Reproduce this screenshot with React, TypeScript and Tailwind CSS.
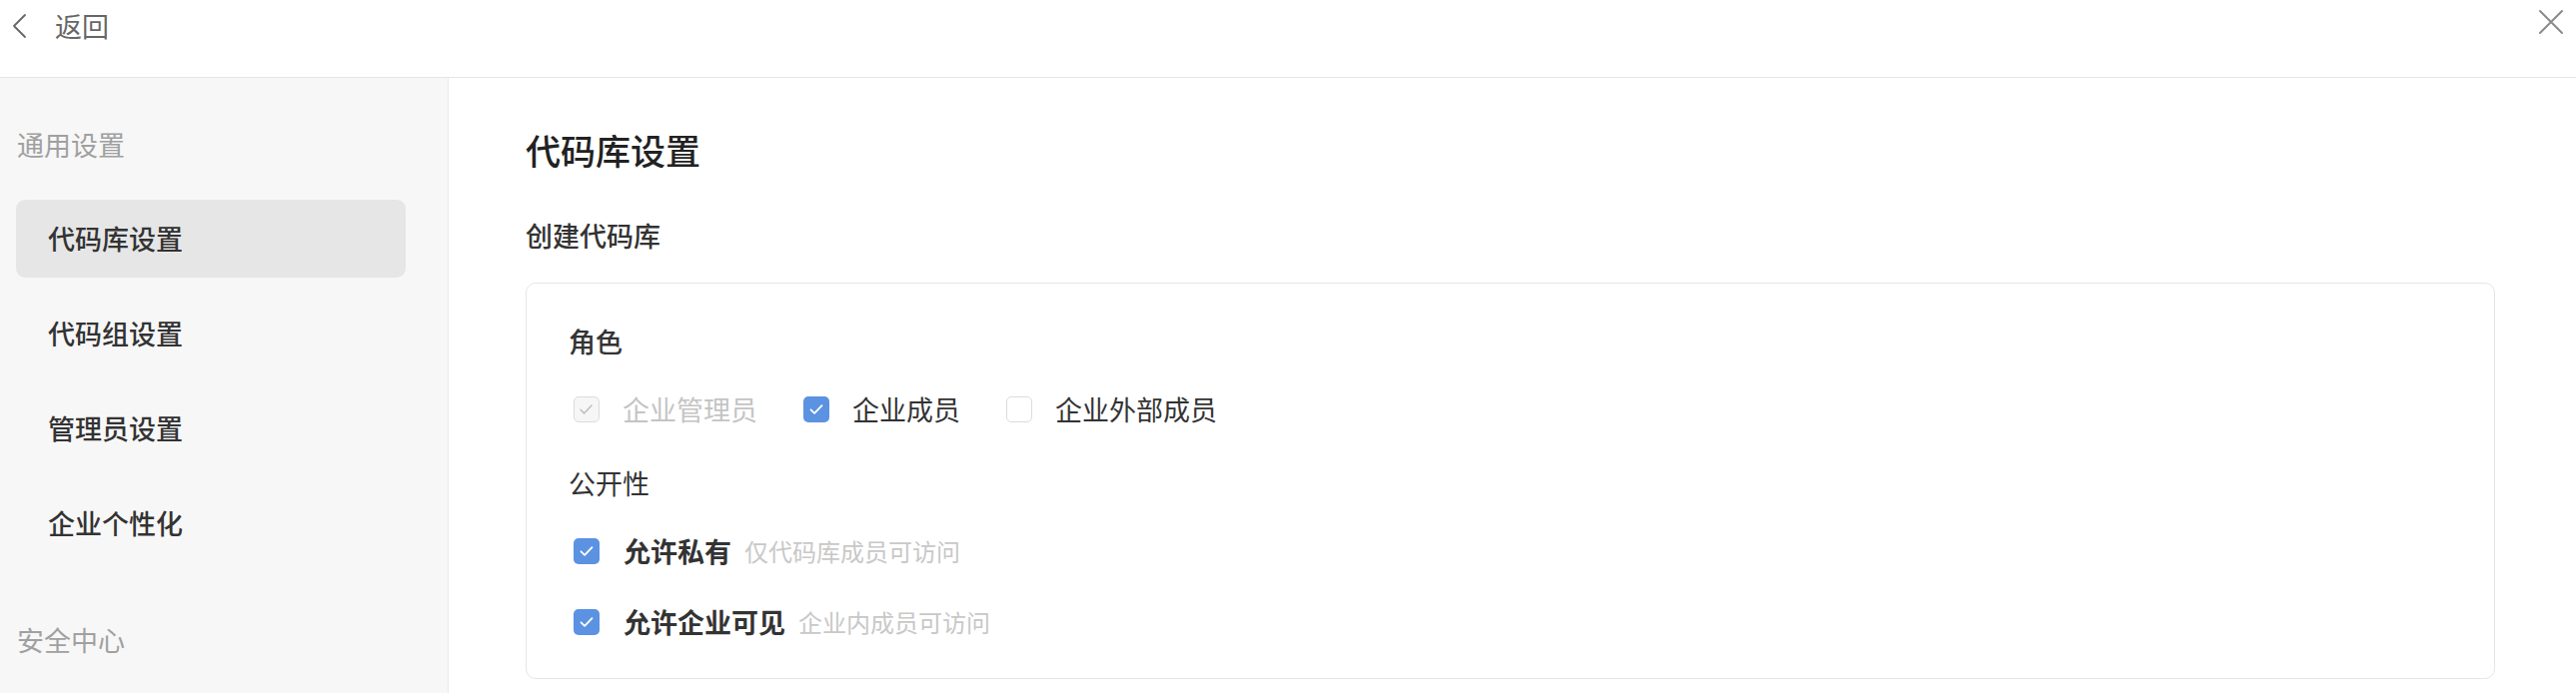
import React from "react";

const font = {
  fontFamily: '"Noto Sans CJK SC", "Noto Sans", sans-serif',
};

type BoxState = "checked" | "unchecked" | "disabled";

const CheckBox = ({ state }: { state: BoxState }) => {
  if (state === "checked") {
    return (
      <span className="flex h-[26px] w-[26px] shrink-0 items-center justify-center rounded-[5px] bg-[#5b92e2]">
        <svg width="20" height="20" viewBox="0 0 20 20" fill="none">
          <path d="M4.5 10.3l3.6 3.6 7.4-7.8" stroke="#fff" strokeWidth="1.8" strokeLinecap="round" strokeLinejoin="round" />
        </svg>
      </span>
    );
  }
  if (state === "disabled") {
    return (
      <span className="flex h-[26px] w-[26px] shrink-0 items-center justify-center rounded-[5px] border border-[#dcdcdc] bg-[#f6f6f6]">
        <svg width="20" height="20" viewBox="0 0 20 20" fill="none">
          <path d="M4 10.3l3.6 3.6 7.4-7.8" stroke="#bdbdbd" strokeWidth="1.5" strokeLinecap="round" strokeLinejoin="round" />
        </svg>
      </span>
    );
  }
  return <span className="h-[26px] w-[26px] shrink-0 rounded-[5px] border border-[#dcdcdc] bg-white" />;
};

const RoleOption = ({ label, state }: { label: string; state: BoxState }) => (
  <div className="mr-[46px] flex items-center gap-[23px]">
    <CheckBox state={state} />
    <span className={`text-[27px] leading-[40px] ${state === "disabled" ? "text-[#c4c4c4]" : "text-[#333]"}`}>
      {label}
    </span>
  </div>
);

const VisibilityOption = ({ label, hint }: { label: string; hint: string }) => (
  <div className="flex h-[40px] items-center">
    <CheckBox state="checked" />
    <span className="ml-[24px] text-[27px] font-semibold leading-[40px] text-[#333]">{label}</span>
    <span className="ml-[13px] text-[24px] leading-[40px] text-[#c8c8c8]">{hint}</span>
  </div>
);

const menu = ["代码库设置", "代码组设置", "管理员设置", "企业个性化"];

export default function App() {
  return (
    <div className="flex h-[694px] w-full flex-col overflow-hidden bg-white" style={font}>
      {/* top bar */}
      <div className="flex h-[78px] shrink-0 items-start justify-between border-b border-[#e6e6e6] pt-[4px]">
        <div className="flex h-[44px] items-center pl-[10px]">
          <svg width="20" height="28" viewBox="0 0 20 28" fill="none">
            <path d="M15 3L4 14l11 11" stroke="#666" strokeWidth="1.8" strokeLinecap="round" strokeLinejoin="round" />
          </svg>
          <span className="ml-[25px] text-[27px] leading-[40px] text-[#666]">返回</span>
        </div>
        <div className="mr-[12px] mt-[5px] flex h-[26px] w-[26px] items-center justify-center">
          <svg width="26" height="26" viewBox="0 0 26 26" fill="none">
            <path d="M2 2l22 22M24 2L2 24" stroke="#8a8a8a" strokeWidth="2" strokeLinecap="round" />
          </svg>
        </div>
      </div>

      <div className="flex min-h-0 flex-1">
        {/* sidebar */}
        <aside className="flex w-[449px] shrink-0 flex-col border-r border-[#ebebeb] bg-[#f7f7f7] pt-[47px]">
          <div className="pl-[17px] text-[27px] leading-[40px] text-[#a0a0a0]">通用设置</div>
          <nav className="mt-[35px] flex flex-col gap-[17px] pl-[16px] pr-[42px]">
            {menu.map((item, i) => (
              <div
                key={item}
                className={`flex h-[78px] items-center rounded-[9px] pl-[32px] text-[27px] font-medium text-[#333] ${
                  i === 0 ? "bg-[#e6e6e6]" : ""
                }`}
              >
                {item}
              </div>
            ))}
          </nav>
          <div className="mt-[58px] pl-[17px] text-[27px] leading-[40px] text-[#a0a0a0]">安全中心</div>
        </aside>

        {/* content */}
        <main className="flex-1 pl-[77px] pr-[81px] pt-[48px]">
          <h1 className="text-[35px] font-medium leading-[48px] text-[#222]">代码库设置</h1>
          <h2 className="mt-[42px] text-[27px] font-medium leading-[40px] text-[#333]">创建代码库</h2>

          <div className="mt-[27px] rounded-[10px] border border-[#e5e5e5] pb-[36px] pl-[42px] pt-[38px]">
            <div className="text-[27px] font-medium leading-[40px] text-[#333]">角色</div>
            <div className="mt-[28px] flex h-[40px] items-center pl-[5px]">
              <RoleOption label="企业管理员" state="disabled" />
              <RoleOption label="企业成员" state="checked" />
              <RoleOption label="企业外部成员" state="unchecked" />
            </div>

            <div className="mt-[34px] text-[27px] leading-[40px] text-[#333]">公开性</div>
            <div className="mt-[28px] flex flex-col gap-[31px] pl-[5px]">
              <VisibilityOption label="允许私有" hint="仅代码库成员可访问" />
              <VisibilityOption label="允许企业可见" hint="企业内成员可访问" />
            </div>
          </div>
        </main>
      </div>
    </div>
  );
}
